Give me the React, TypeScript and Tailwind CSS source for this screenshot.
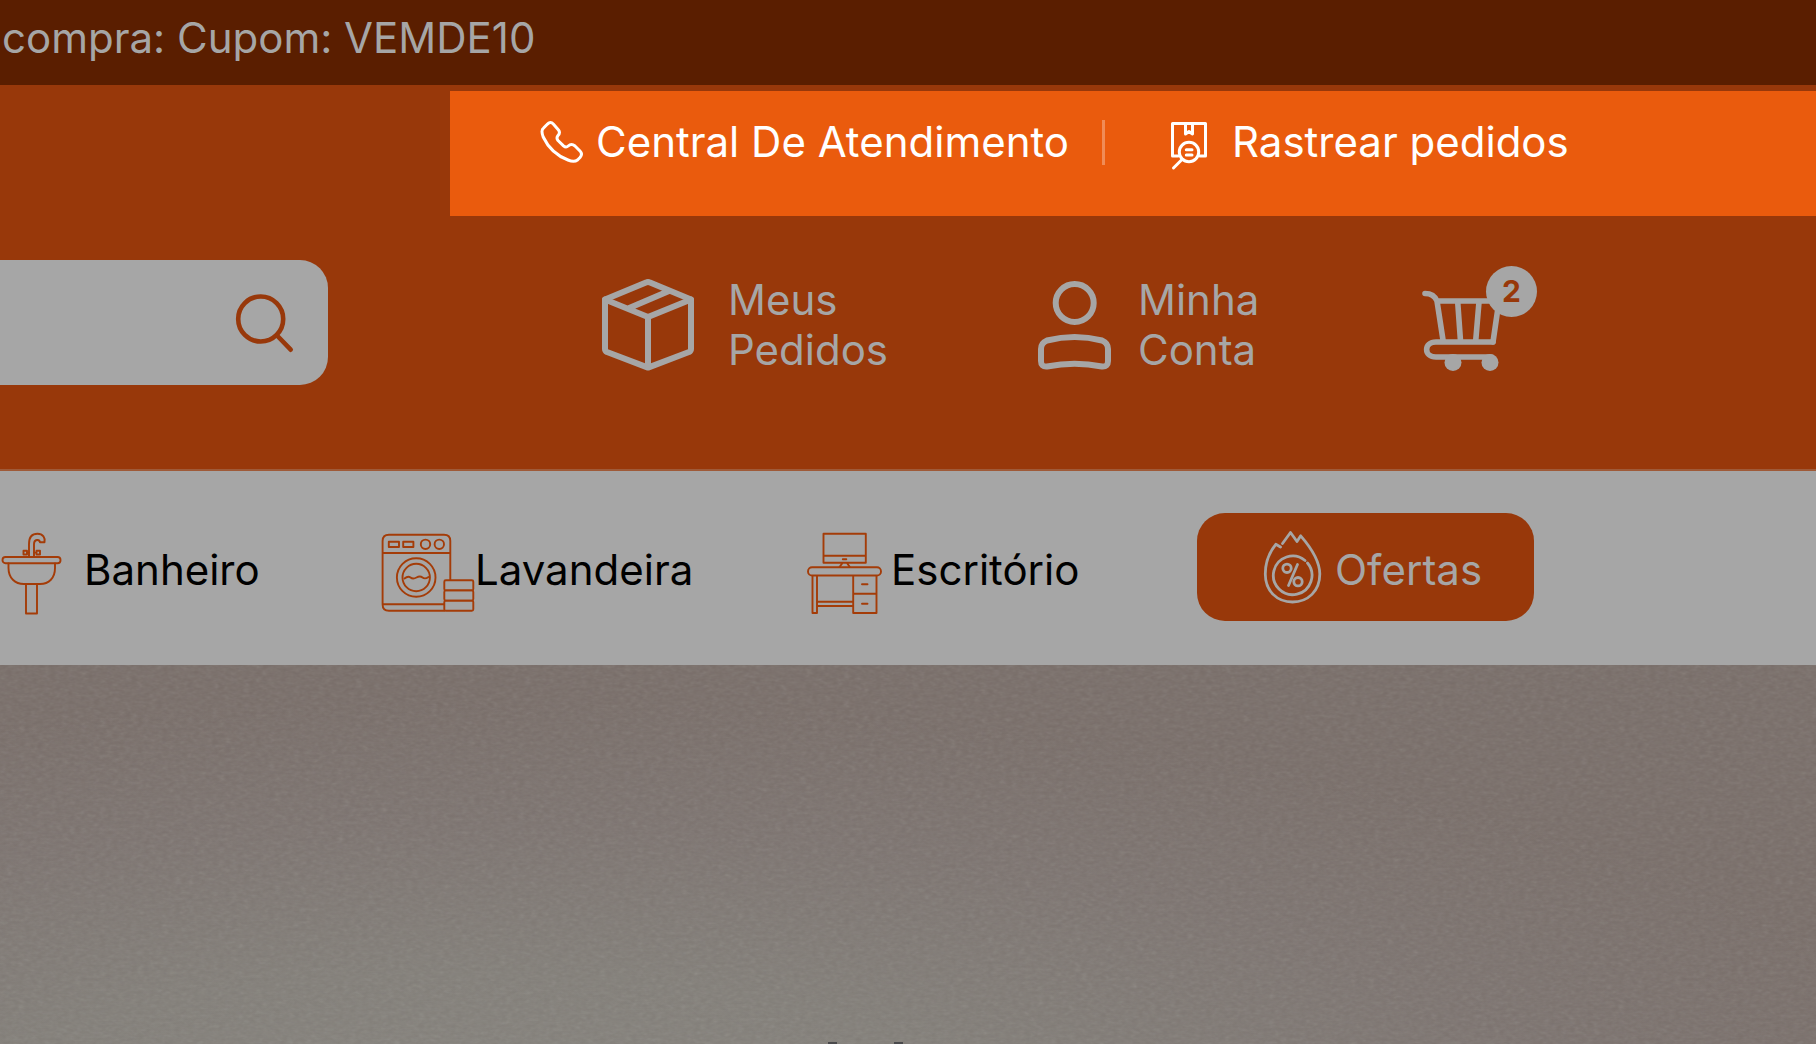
import type { ReactNode } from "react";

type IconProps = { box: string; size: string; weight: number; children: ReactNode };

function Icon({ box, size, weight, children }: IconProps) {
  return (
    <svg
      viewBox={box}
      className={`shrink-0 ${size}`}
      fill="none"
      stroke="currentColor"
      strokeWidth={weight}
      strokeLinecap="round"
      strokeLinejoin="round"
      aria-hidden="true"
    >
      {children}
    </svg>
  );
}

const PhoneIcon = () => (
  <Icon box="540 121 44 44" size="w-11 h-11" weight={3}>
    <path d="M547 125.5Q550.3 121.6 553.5 125.2L558.5 131Q560.6 133.8 558 136.5Q556 139 558 141.5L563.5 146.8Q566 149 568.2 147Q571.5 144 575 147L580 152Q583 155 580 158.5L577.5 161Q574 163.6 568 161Q551 154.5 543.2 138Q540.6 131 543.6 129Z" />
  </Icon>
);

const TrackIcon = () => (
  <Icon box="1170 121 38 50" size="w-[38px] h-[50px]" weight={3}>
    <path d="M1178 156H1172.5V123.5H1205.5V156H1200" />
    <path d="M1185.5 124V134L1189 131.5L1192.5 134V124" />
    <circle cx="1189" cy="152" r="9.7" />
    <path d="M1186.3 149.7H1192M1186.3 155H1192M1181.5 160L1173.5 168" />
  </Icon>
);

const SearchIcon = () => (
  <Icon box="235 293 60 60" size="w-[60px] h-[60px]" weight={4.6}>
    <circle cx="260.7" cy="319" r="22.5" />
    <path d="M277.5 336L290.7 349.7" />
  </Icon>
);

const BoxIcon = () => (
  <Icon box="602 278 92 94" size="w-[92px] h-[94px]" weight={6}>
    <path d="M646 282.6Q648 281.5 650 282.6L691 299.5V349Q691 351 689 352L648 367.6L607 352Q605 351 605 349V299.5Z" />
    <path d="M605 299.5L648 317L691 299.5M648 317V367M628 308.5L669 291" />
  </Icon>
);

const PersonIcon = () => (
  <Icon box="1038 278 74 94" size="w-[74px] h-[94px]" weight={6}>
    <circle cx="1074.7" cy="303" r="19" />
    <path d="M1041 349Q1041 343 1047 340.5Q1074.7 333.5 1102 340.5Q1108 343 1108 349V361Q1108 367 1102 366.5Q1074.7 361 1047 366.5Q1041 367 1041 361Z" />
  </Icon>
);

const CartIcon = () => (
  <Icon box="1422 278 80 96" size="w-20 h-24" weight={5.6}>
    <path d="M1425 294.5C1431 294.5 1435 297 1437 302L1443 341M1437 302H1499L1493 343" />
    <path d="M1457.7 303L1460.5 342M1479 303L1475.7 342" />
    <path d="M1493 343H1436C1423.5 343 1423.5 358 1436 358H1491" />
    <circle cx="1453" cy="363.5" r="8.5" fill="currentColor" stroke="none" />
    <circle cx="1490" cy="363.5" r="8.5" fill="currentColor" stroke="none" />
  </Icon>
);

const SinkIcon = () => (
  <Icon box="0 533 62 83" size="w-[62px] h-[83px]" weight={1.9}>
    <rect x="2.5" y="558" width="58" height="6.2" rx="3" />
    <path d="M8.5 564.5V569C8.5 579 15 585 24 585H40C49 585 55 579 55 569V564.5M26 585V614.5H37V585" />
    <path d="M29 557.5V545C29 538 32 534.8 37.5 534.8C43 534.8 45.5 539 44.5 543.3H40C39.5 540 34 540 34 545V557.5" />
    <path d="M23.5 551.8H27V555.5H23.5ZM36.5 551.8H40V555.5H36.5ZM27 553.6H29M34 553.6H36.5" />
  </Icon>
);

const WasherIcon = () => (
  <Icon box="381 533 94 80" size="w-[94px] h-20" weight={1.9}>
    <path d="M450.3 580V541Q450.3 534.8 444 534.8H389Q382.6 534.8 382.6 541V604.5Q382.6 610.8 389 610.8H444.5M382.6 553H450.3M382.6 604.3H444" />
    <path d="M388.8 541.8H399V547H388.8ZM403.2 541.8H413.4V547H403.2Z" />
    <circle cx="425.5" cy="544.3" r="4.7" />
    <circle cx="439.3" cy="544.3" r="4.7" />
    <circle cx="416.2" cy="577.5" r="19.3" />
    <circle cx="416.2" cy="577.5" r="13.7" />
    <path d="M404.5 578.5Q408 575.5 410.5 577.5T416.5 577.5T422.5 577.5T428.5 577" />
    <rect x="444.3" y="580.2" width="29" height="10.2" rx="1.5" />
    <rect x="444.3" y="590.4" width="29" height="10.2" rx="1.5" />
    <rect x="444.3" y="600.6" width="29" height="10.2" rx="1.5" />
  </Icon>
);

const DeskIcon = () => (
  <Icon box="806 533 77 83" size="w-[77px] h-[83px]" weight={1.9}>
    <path d="M823.5 534.8H865.8V563.8H823.5ZM823.5 556.8H865.8M842.8 560.3H846.3M842.5 564L839.5 568M847 564L849.8 568" />
    <rect x="808" y="568.3" width="73" height="8.2" rx="4.1" />
    <path d="M812.5 577V614H817V577M817 602.7H853.2M817 607H853.2M853.2 577V614H876.5V577M853.2 594.8H876.5M862 585.3H867.5M862 604.7H867.5" />
  </Icon>
);

const FlameIcon = () => (
  <Icon box="1263 530 60 75" size="w-[60px] h-[75px]" weight={2.8}>
    <path d="M1280.5 547L1275.8 544.3C1268 554 1265.3 564 1265.3 574C1265.3 591 1277 602 1292.5 602C1308 602 1319.8 591 1319.8 574C1319.8 561 1310 546.5 1300.7 535.8L1297 541.5L1290.5 532.5L1282.5 543.5" />
    <path d="M1305 560.5A19.3 19.3 0 1 0 1307.5 563" />
    <circle cx="1287" cy="568.3" r="4.2" />
    <circle cx="1298" cy="581.7" r="4.2" />
    <path d="M1297.5 564.5L1288.5 585.5" />
  </Icon>
);

const categories = [
  { name: "Banheiro", icon: <SinkIcon />, gap: "gap-[22px]" },
  { name: "Lavandeira", icon: <WasherIcon />, gap: "gap-0" },
  { name: "Escritório", icon: <DeskIcon />, gap: "gap-2" },
];

export default function App() {
  return (
    <div className="flex min-h-screen flex-col overflow-hidden bg-[#a6a6a6] font-['Inter',sans-serif] text-[42px] leading-[50px] text-[#a6a6a6]">
      <div className="flex h-[85px] items-center bg-[#5a1e00] px-0.5 pb-2.5">
        <p className="whitespace-nowrap">compra: Cupom: VEMDE10</p>
      </div>

      <header className="border-b-2 border-[#9f5a38] bg-[#98380a] pt-1.5 pb-20">
        <div className="ml-[450px] flex h-[125px] items-start bg-[#ea5b0d] pt-[26px] pl-[90px] text-white">
          <a href="#atendimento" className="flex w-[562px] items-center gap-3 whitespace-nowrap">
            <PhoneIcon />
            Central De Atendimento
          </a>
          <span className="mt-[3px] h-[45px] w-[3px] bg-[#f08c56]" />
          <a href="#rastrear" className="ml-[65px] flex items-start gap-6 whitespace-nowrap">
            <span className="pt-1">
              <TrackIcon />
            </span>
            Rastrear pedidos
          </a>
        </div>

        <div className="mt-11 flex h-[129px] items-end">
          <form className="flex h-[125px] w-[328px] items-center self-start rounded-r-[28px] bg-[#a6a6a6] pr-[33px]">
            <input
              type="search"
              aria-label="Buscar produtos"
              className="h-full min-w-0 flex-1 bg-transparent text-black outline-none"
            />
            <button type="button" aria-label="Buscar" className="text-[#98380a]">
              <SearchIcon />
            </button>
          </form>
          <div className="ml-[274px] flex h-full items-center">
            <a href="#pedidos" className="flex w-[436px] items-center gap-[34px]">
              <BoxIcon />
              <span>
                Meus
                <br />
                Pedidos
              </span>
            </a>
            <a href="#conta" className="flex w-[384px] items-center gap-[26px]">
              <PersonIcon />
              <span>
                Minha
                <br />
                Conta
              </span>
            </a>
            <a href="#carrinho" aria-label="Carrinho, 2 itens" className="relative">
              <CartIcon />
              <span className="absolute -top-[11px] left-16 flex h-[51px] w-[51px] items-center justify-center rounded-full bg-[#a6a6a6] text-3xl font-bold text-[#98380a]">
                2
              </span>
            </a>
          </div>
        </div>
      </header>

      <nav className="grid h-[194px] grid-cols-[381px_425px_391px_337px] items-center pb-0.5 text-black">
        {categories.map((c) => (
          <a key={c.name} href={`#${c.name}`} className={`flex items-center ${c.gap}`}>
            <span className="pt-3 text-[#a43c08]">{c.icon}</span>
            <span className="pt-1.5">{c.name}</span>
          </a>
        ))}
        <a
          href="#ofertas"
          className="flex h-[108px] items-center gap-3 rounded-[28px] bg-[#98380a] pl-[66px] text-[#a6a6a6]"
        >
          <FlameIcon />
          <span className="pt-1.5">Ofertas</span>
        </a>
      </nav>

      <section
        aria-label="Destaques"
        className="relative flex flex-1 items-end overflow-hidden bg-[#786d68] bg-[radial-gradient(ellipse_1500px_420px_at_26%_120%,#85827c_0%,#827e78_35%,#7c736f_70%,#786d68_100%)]"
      >
        <svg className="absolute inset-0 h-full w-full opacity-15" aria-hidden="true">
          <filter id="grain">
            <feTurbulence type="fractalNoise" baseFrequency="0.16 0.3" numOctaves="2" seed="4" />
            <feColorMatrix type="saturate" values="0.15" />
          </filter>
          <rect width="100%" height="100%" filter="url(#grain)" />
        </svg>
        <div className="relative ml-[828px] flex gap-[57px]">
          <span className="h-0.5 w-[9px] bg-[#4a4a4c]" />
          <span className="h-0.5 w-[9px] bg-[#4a4a4c]" />
        </div>
      </section>
    </div>
  );
}
